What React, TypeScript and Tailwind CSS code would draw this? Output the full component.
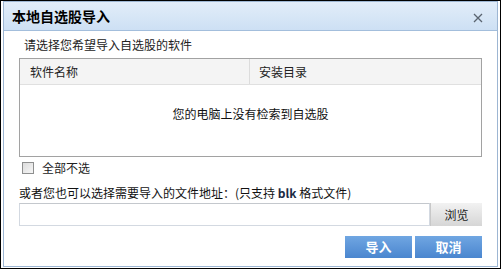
import { useState } from 'react'

const font = { fontFamily: '"Noto Sans CJK SC", "Liberation Sans", sans-serif' }

function CloseIcon() {
  return (
    <svg width="10" height="10" viewBox="0 0 10 10" className="text-[#5a6470]">
      <path d="M1 1 L9 9 M9 1 L1 9" stroke="currentColor" strokeWidth="1.3" />
    </svg>
  )
}

export default function App() {
  const [checked, setChecked] = useState(false)
  const [path, setPath] = useState('')

  return (
    <div className="w-[502px] h-[271px] bg-white" style={font}>
      <div className="w-[501px] h-[269px] border border-black pl-[2px] pr-[2px] pb-px">
        <div className="flex flex-col h-full border border-[#9db6d3] bg-white">
          {/* Title bar */}
          <div className="flex items-center justify-between h-[29px] shrink-0 border-b border-[#a3bedc] bg-gradient-to-b from-[#e2edf9] to-[#cde0f4] pl-[8px] pr-[14px]">
            <h1 className="text-[14px] font-bold leading-none text-black">本地自选股导入</h1>
            <button className="mt-[3px]">
              <CloseIcon />
            </button>
          </div>

          {/* Body */}
          <div className="flex flex-col px-[15px]">
            <p className="pl-[5px] pt-[7px] h-[27px] text-[12px] leading-[14px] text-[#222]">
              请选择您希望导入自选股的软件
            </p>

            {/* Software table */}
            <div className="h-[99px] border border-[#a2a2a2] flex flex-col">
              <div className="flex h-[26px] shrink-0 bg-[#f4f4f4] border-b border-[#e0e0e0] text-[12px] text-[#222]">
                <div className="w-[230px] border-r border-[#dcdcdc] pl-[10px] flex items-center">软件名称</div>
                <div className="flex-1 pl-[9px] flex items-center">安装目录</div>
              </div>
              <div className="flex-1 flex justify-center pt-[22px] text-[12px] leading-[14px] text-[#111]">
                您的电脑上没有检索到自选股
              </div>
            </div>

            {/* Select all */}
            <label className="flex items-center h-[20px] mt-[1px] pl-[3px] text-[12px] text-[#222] cursor-pointer">
              <span
                onClick={() => setChecked(!checked)}
                className="w-[12px] h-[12px] border border-[#8e8f8f] bg-gradient-to-br from-[#dcdcdc] to-[#f6f6f6] flex items-center justify-center"
              >
                {checked && <span className="w-[6px] h-[6px] bg-[#333]" />}
              </span>
              <span className="ml-[8px]">全部不选</span>
            </label>

            <p className="mt-[8px] h-[16px] text-[12px] leading-[14px] text-[#111]">
              或者您也可以选择需要导入的文件地址：(只支持 <b className="font-bold text-[#1a2a44]">blk</b> 格式文件)
            </p>

            {/* File path */}
            <div className="flex h-[23px] mt-[1px]">
              <input
                value={path}
                onChange={(e) => setPath(e.target.value)}
                className="flex-1 border border-[#d3d9e1] border-t-[#c4c8cd] outline-none px-1 text-[12px]"
              />
              <button className="w-[52px] bg-gradient-to-b from-[#f2f2f2] to-[#d6d6d6] border-l border-[#c8c8c8] text-[12px] text-[#222]">
                浏览
              </button>
            </div>

            {/* Actions */}
            <div className="flex justify-end gap-[3px] mt-[10px]">
              <button className="w-[67px] h-[22px] bg-gradient-to-b from-[#70a6e2] to-[#4a86cf] text-white text-[13px] font-bold">
                导入
              </button>
              <button className="w-[67px] h-[22px] bg-gradient-to-b from-[#70a6e2] to-[#4a86cf] text-white text-[13px] font-bold">
                取消
              </button>
            </div>
          </div>
        </div>
      </div>
    </div>
  )
}
